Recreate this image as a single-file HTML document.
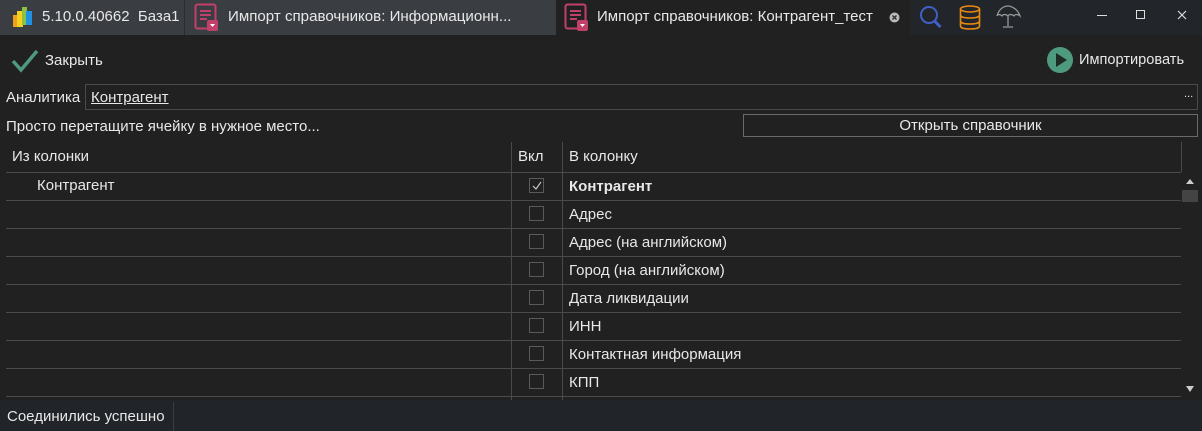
<!DOCTYPE html>
<html><head><meta charset="utf-8"><style>
*{margin:0;padding:0;box-sizing:border-box}
body{width:1202px;height:431px;background:#212121;font-family:"Liberation Sans","Noto Sans CJK SC",sans-serif;font-size:15px;color:#e8e8e8;position:relative;overflow:hidden}
.a{position:absolute;white-space:nowrap}
.hl{position:absolute;height:1px;background:#4a4a4a}
.vl{position:absolute;width:1px;background:#4a4a4a}
.cb{position:absolute;left:529px;width:15px;height:15px;border:1px solid #5a5a5a}
</style></head><body>
<div class="a" style="left:0;top:0;width:910px;height:35px;background:#3a3d42"></div>
<div class="a" style="left:184px;top:0;width:1px;height:35px;background:#2a2c30"></div>
<div class="a" style="left:556px;top:0;width:354px;height:35px;background:#212121"></div>
<div class="a" style="left:910px;top:0;width:292px;height:35px;background:#22262b"></div>
<svg class="a" style="left:12px;top:5px" width="22" height="24"><rect x="1" y="10" width="5" height="12" fill="#f0a020"/><rect x="5" y="6" width="6" height="16" fill="#f4d020"/><rect x="10" y="2" width="5" height="18" fill="#8cc040"/><rect x="14" y="6" width="6" height="14" fill="#2090e0"/></svg>
<div class="a" style="left:42px;top:8px;font-size:15px">5.10.0.40662&nbsp;&nbsp;База1</div>
<svg class="a" style="left:194px;top:3px" width="30" height="30"><rect x="1.5" y="1.5" width="20" height="24" rx="2" fill="none" stroke="#c0406a" stroke-width="2"/><path d="M6 8h11M6 12h11M6 16h7" stroke="#c0406a" stroke-width="2"/><rect x="13" y="17" width="11" height="11" rx="2" fill="#c0406a"/><path d="M16 21h5l-2.5 3z" fill="#fff"/></svg>
<div class="a" style="left:228px;top:8px;font-size:15.1px">Импорт справочников: Информационн...</div>
<svg class="a" style="left:564px;top:3px" width="30" height="30"><rect x="1.5" y="1.5" width="20" height="24" rx="2" fill="none" stroke="#c0406a" stroke-width="2"/><path d="M6 8h11M6 12h11M6 16h7" stroke="#c0406a" stroke-width="2"/><rect x="13" y="17" width="11" height="11" rx="2" fill="#c0406a"/><path d="M16 21h5l-2.5 3z" fill="#fff"/></svg>
<div class="a" style="left:597px;top:8px;font-size:15px">Импорт справочников: Контрагент_тест</div>
<svg class="a" style="left:889px;top:12px" width="11" height="11"><circle cx="5.5" cy="5.5" r="5" fill="#bbb"/><path d="M3.5 3.5l4 4M7.5 3.5l-4 4" stroke="#333" stroke-width="1.5"/></svg>
<svg class="a" style="left:918px;top:4px" width="26" height="26"><circle cx="11" cy="11" r="8" fill="none" stroke="#4060c8" stroke-width="2"/><path d="M16.5 17l6 6" stroke="#4060c8" stroke-width="3"/></svg>
<svg class="a" style="left:959px;top:5px" width="24" height="26"><g fill="none" stroke="#e88a10" stroke-width="1.6"><ellipse cx="11" cy="4" rx="9.5" ry="3"/><path d="M1.5 4v17c0 2 4 3 9.5 3s9.5-1 9.5-3V4M1.5 10c0 2 4 3 9.5 3s9.5-1 9.5-3M1.5 16c0 2 4 3 9.5 3s9.5-1 9.5-3"/></g></svg>
<svg class="a" style="left:995px;top:4px" width="28" height="26"><path d="M2 12C4 4 10 2 13 2s10 3 12 10c-2-2-5-2-6 0-2-2-5-2-6 0-2-2-5-2-6 0-2-2-4-2-5 0z" fill="none" stroke="#999" stroke-width="1.2"/><path d="M13 12v10M8 23h10" stroke="#999" stroke-width="1.3"/></svg>
<div class="a" style="left:1097px;top:15px;width:10px;height:1px;background:#ddd"></div>
<div class="a" style="left:1136px;top:10px;width:9px;height:9px;border:1px solid #ddd"></div>
<svg class="a" style="left:1177px;top:10px" width="10" height="10"><path d="M1 1l8 8M9 1l-8 8" stroke="#ddd" stroke-width="1.2"/></svg>

<svg class="a" style="left:10px;top:48px" width="30" height="26"><path d="M3 13l8 9L27 3" fill="none" stroke="#4e9a7e" stroke-width="3.5"/></svg>
<div class="a" style="left:45px;top:52px">Закрыть</div>
<svg class="a" style="left:1046px;top:46px" width="28" height="28"><circle cx="14" cy="14" r="13" fill="#4e9a7e"/><path d="M10 7v14l11-7z" fill="#1e2a26"/></svg>
<div class="a" style="left:1079px;top:52px;font-size:14.6px">Импортировать</div>

<div class="a" style="left:6px;top:89px">Аналитика</div>
<div class="a" style="left:85px;top:84px;width:1113px;height:26px;border:1px solid #4a4a4a"></div>
<div class="a" style="left:91px;top:89px;text-decoration:underline">Контрагент</div>
<div class="a" style="left:1184px;top:88px;font-size:11px">...</div>
<div class="a" style="left:6px;top:118px">Просто перетащите ячейку в нужное место...</div>
<div class="a" style="left:743px;top:114px;width:455px;height:23px;border:1px solid #6a6a6a;text-align:center;line-height:21px">Открыть справочник</div>

<div class="vl" style="left:511px;top:142px;height:258px"></div>
<div class="vl" style="left:562px;top:142px;height:258px"></div>
<div class="vl" style="left:1181px;top:142px;height:30px"></div>
<div class="a" style="left:12px;top:148px">Из колонки</div>
<div class="a" style="left:518px;top:148px">Вкл</div>
<div class="a" style="left:569px;top:148px">В колонку</div>
<div class="hl" style="left:6px;top:172px;width:1175px"></div>
<div class="hl" style="left:6px;top:200px;width:1175px"></div>
<div class="hl" style="left:6px;top:228px;width:1175px"></div>
<div class="hl" style="left:6px;top:256px;width:1175px"></div>
<div class="hl" style="left:6px;top:284px;width:1175px"></div>
<div class="hl" style="left:6px;top:312px;width:1175px"></div>
<div class="hl" style="left:6px;top:340px;width:1175px"></div>
<div class="hl" style="left:6px;top:368px;width:1175px"></div>
<div class="hl" style="left:6px;top:396px;width:1175px"></div>
<div class="a" style="left:37px;top:177px">Контрагент</div>
<div class="cb" style="top:178px"><svg width="13" height="13" style="position:absolute;left:0;top:0"><path d="M3 7l3 3 5-7" fill="none" stroke="#ccc" stroke-width="1.1"/></svg></div>
<div class="a" style="left:569px;top:178px;font-weight:bold">Контрагент</div>
<div class="cb" style="top:206px"></div><div class="a" style="left:569px;top:206px">Адрес</div>
<div class="cb" style="top:234px"></div><div class="a" style="left:569px;top:234px">Адрес (на английском)</div>
<div class="cb" style="top:262px"></div><div class="a" style="left:569px;top:262px">Город (на английском)</div>
<div class="cb" style="top:290px"></div><div class="a" style="left:569px;top:290px">Дата ликвидации</div>
<div class="cb" style="top:318px"></div><div class="a" style="left:569px;top:318px">ИНН</div>
<div class="cb" style="top:346px"></div><div class="a" style="left:569px;top:346px">Контактная информация</div>
<div class="cb" style="top:374px"></div><div class="a" style="left:569px;top:374px">КПП</div>
<svg class="a" style="left:1185px;top:178px" width="10" height="8"><path d="M1 6h8L5 1z" fill="#ccc"/></svg>
<div class="a" style="left:1182px;top:190px;width:16px;height:12px;background:#444"></div>
<svg class="a" style="left:1185px;top:385px" width="10" height="8"><path d="M1 1h8L5 7z" fill="#ccc"/></svg>

<div class="a" style="left:0;top:400px;width:1202px;height:31px;background:#212429"></div>
<div class="a" style="left:173px;top:402px;width:1px;height:29px;background:#3a3d42"></div>
<div class="a" style="left:7px;top:408px">Соединились успешно</div>
</body></html>
